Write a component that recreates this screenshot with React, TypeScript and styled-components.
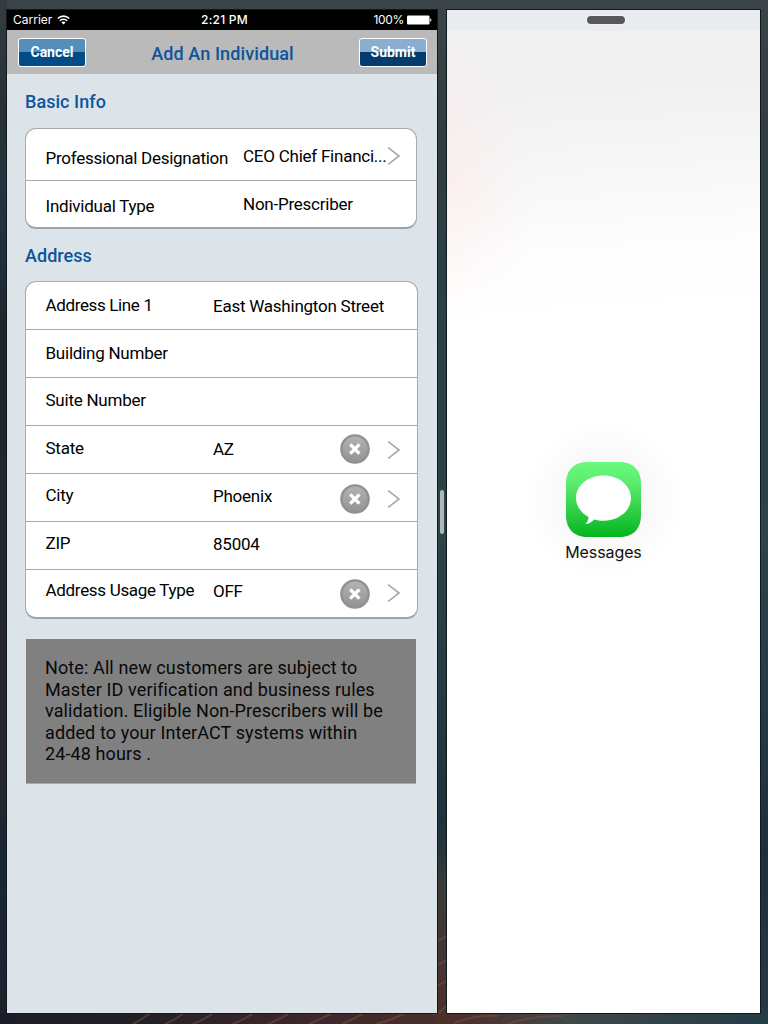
import React from "react";
import styled, { createGlobalStyle } from "styled-components";

const GlobalStyle = createGlobalStyle`
  *, *::before, *::after { box-sizing: border-box; }
  body { margin: 0; font-family: Roboto, "Liberation Sans", sans-serif; }
`;

const Screen = styled.div`
  position: relative;
  width: 768px;
  height: 1024px;
  padding: 10px 8px 11px 7px;
  display: grid;
  grid-template-columns: 430px 10px 313px;
  overflow: hidden;
  background:
    linear-gradient(180deg, #343c42 0, #273034 110px, #22363e 180px, #20303a 250px, #20252f 330px, #242631 500px, #262630 780px, #182634 880px, #20202c 1014px) 0 0 / 7px 1024px no-repeat,
    linear-gradient(180deg, #3b4549 0, #303c41 130px, #2b3f46 260px, #2c434a 540px, #243b43 700px, #1c303b 850px, #263a43 1024px);
`;

const Wallpaper = styled.svg`
  position: absolute;
  left: 0;
  bottom: 0;
`;

const AppWindow = styled.section`
  position: relative;
  display: flex;
  flex-direction: column;
  background: #dce4ea;
  box-shadow: 0 0 0 1px #10191b;
`;

const StatusBar = styled.div`
  display: grid;
  grid-template-columns: 1fr auto 1fr;
  align-items: center;
  height: 20px;
  padding: 0 5px 0 6px;
  background: #000;
  color: #fff;
  font: 400 12px/20px Inter, Roboto, sans-serif;
`;

const StatusGroup = styled.div<{ $end?: boolean }>`
  display: flex;
  align-items: center;
  justify-content: ${(p) => (p.$end ? "flex-end" : "flex-start")};
  gap: ${(p) => (p.$end ? 3 : 5)}px;
  letter-spacing: ${(p) => (p.$end ? -0.3 : 0)}px;
`;

const Clock = styled.span`
  padding-left: 4px;
  font-weight: 500;
  letter-spacing: 0.25px;
`;

const NavBar = styled.header`
  display: flex;
  align-items: center;
  justify-content: space-between;
  height: 44px;
  padding: 0 10px 0 11px;
  background: #bababa;
`;

const NavTitle = styled.h1`
  margin: 0;
  padding-top: 3px;
  font-size: 18px;
  font-weight: 480;
  letter-spacing: 0.1px;
  color: #0d559d;
`;

const NavButton = styled.button<{ $top: string; $bottom: string }>`
  width: 68px;
  height: 29px;
  padding: 0;
  border: 1px solid #fff;
  border-radius: 3px;
  background: linear-gradient(180deg, ${(p) => p.$top} 0 50%, ${(p) => p.$bottom} 50% 100%);
  color: #fff;
  font: 700 14px/26px Roboto, sans-serif;
`;

const Form = styled.main`
  display: flex;
  flex-direction: column;
  padding: 17px 19px 0 18px;
`;

const SectionTitle = styled.h2<{ $height: number }>`
  margin: 0;
  height: ${(p) => p.$height}px;
  font-size: 18px;
  font-weight: 480;
  line-height: 22px;
  letter-spacing: 0.05px;
  color: #0d559d;
`;

const Card = styled.div<{ $width: number; $gap: number }>`
  width: ${(p) => p.$width}px;
  margin-bottom: ${(p) => p.$gap}px;
  border: 1px solid #a7abae;
  border-bottom-width: 2px;
  border-bottom-color: #9ca5aa;
  border-radius: 11px;
  background: #fff;
  overflow: hidden;
`;

const Row = styled.div<{ $height: number; $columns: string }>`
  display: grid;
  grid-template-columns: ${(p) => p.$columns};
  align-items: start;
  height: ${(p) => p.$height}px;
  padding-left: 19.5px;
  & + & { border-top: 1px solid #a9a9a9; }
`;

const RowText = styled.span<{ $top: number; $spacing?: number }>`
  padding-top: ${(p) => p.$top}px;
  font-size: 17px;
  line-height: 20px;
  letter-spacing: ${(p) => p.$spacing ?? -0.24}px;
  white-space: nowrap;
  color: #000;
`;

const IconCell = styled.span<{ $top: number }>`
  padding-top: ${(p) => p.$top}px;
  line-height: 0;
`;

const Note = styled.p`
  width: 390px;
  height: 145px;
  margin: 0 0 0 1px;
  padding: 18px 19px;
  border-bottom: 1px solid #aaa;
  background: #808080;
  color: #080808;
  font-size: 18px;
  line-height: 21.6px;
  letter-spacing: 0.11px;
  white-space: nowrap;
`;

const Divider = styled.div`
  position: relative;
  display: flex;
  align-items: center;
  justify-content: center;
`;

const DividerGrip = styled.span`
  width: 4px;
  height: 44px;
  border-radius: 2px;
  background: #b2b8ba;
`;

const SideWindow = styled.section`
  position: relative;
  display: flex;
  flex-direction: column;
  align-items: center;
  box-shadow: 0 0 0 1px #10191b;
  background:
    radial-gradient(ellipse 90px 150px at 0 165px, rgba(255, 230, 228, 0.45), transparent),
    linear-gradient(176deg, #efeff1 0, #f1f1f2 90px, #f7f7f8 170px, #fdfdfd 250px, #fff 320px);
`;

const SideHeader = styled.div`
  display: flex;
  align-items: center;
  justify-content: center;
  width: 100%;
  height: 20px;
  padding-left: 5px;
  background: #e8ecef;
`;

const Handle = styled.span`
  width: 38px;
  height: 8px;
  border-radius: 4px;
  background: #58585a;
  box-shadow: 0 0 1px 1px #f3f4f5;
`;

const AppTile = styled.div`
  display: flex;
  flex-direction: column;
  align-items: center;
  width: 180px;
  margin-top: 392px;
  padding-top: 40px;
  height: 190px;
  gap: 5px;
  background: radial-gradient(circle 82px at 50% 78px, rgba(0, 0, 0, 0.035) 30%, transparent 100%);
  font: 400 16px/20px Inter, Roboto, sans-serif;
  letter-spacing: -0.1px;
  color: #111;
`;

const WifiIcon = () => (
  <svg width="13" height="10" viewBox="0 0 13 10" fill="none" stroke="#fff" strokeWidth="1.6">
    <path d="M.8 3.5a8.1 8.1 0 0 1 11.4 0M2.8 5.7a5.3 5.3 0 0 1 7.4 0" />
    <path d="M6.5 9.6 4.5 7.5a2.8 2.8 0 0 1 4 0Z" fill="#fff" stroke="none" />
  </svg>
);

const BatteryIcon = () => (
  <svg width="25" height="10" viewBox="0 0 25 10" fill="#fff">
    <rect x="0" y="0.5" width="22.5" height="9" rx="1.2" />
    <path d="M23.2 3.2c1.6.5 1.6 3.1 0 3.6Z" />
  </svg>
);

const Chevron = () => (
  <svg width="14" height="20" viewBox="0 0 14 20" fill="none" stroke="#aaa" strokeWidth="1.7">
    <path d="M1.2 1.7 12 10 1.2 18.3" />
  </svg>
);

const ClearIcon = () => (
  <svg width="30" height="30" viewBox="0 0 30 30">
    <defs>
      <linearGradient id="clearFill" x1="0" y1="0" x2="0" y2="1">
        <stop offset="0" stopColor="#b4b4b4" />
        <stop offset="1" stopColor="#929292" />
      </linearGradient>
    </defs>
    <circle cx="15" cy="15" r="13.6" fill="url(#clearFill)" stroke="#919191" strokeWidth="2.4" />
    <path d="m10.2 10.4 9.200 9.200m0-9.200-9.200 9.200" stroke="#fff" strokeWidth="3.4" />
  </svg>
);

const MessagesIcon = () => (
  <svg width="75" height="75" viewBox="0 0 75 75">
    <defs>
      <linearGradient id="messagesFill" x1="0" y1="0" x2="0" y2="1">
        <stop offset="0" stopColor="#69fb7d" />
        <stop offset=".3" stopColor="#5bea6d" />
        <stop offset="1" stopColor="#04b41f" />
      </linearGradient>
    </defs>
    <path
      d="M22 0h31c13 0 22 7 22 22v31c0 15-9 22-22 22H22C9 75 0 68 0 53V22C0 7 9 0 22 0Z"
      fill="url(#messagesFill)"
    />
    <path
      d="M37.500 13.500c15.300 0 27.500 10 27.500 22.600S52.800 58.700 37.500 58.700c-3.300 0-6.500-.5-9.400-1.300-2.500 2.500-5.200 4.400-8.700 4.700 1.700-1.700 3.200-3.800 3-7.200C14.800 50.700 10 43.900 10 36.100c0-12.600 12.200-22.600 27.500-22.600Z"
      fill="#fff"
    />
  </svg>
);

type Field = {
  label: string;
  value?: string;
  height: number;
  labelTop: number;
  valueTop?: number;
  labelSpacing?: number;
  clearTop?: number;
  chevronTop?: number;
};

const basicFields: Field[] = [
  { label: "Professional Designation", value: "CEO Chief Financi...", height: 51, labelTop: 19, valueTop: 17, chevronTop: 17, labelSpacing: -0.27 },
  { label: "Individual Type", value: "Non-Prescriber", height: 47, labelTop: 15, valueTop: 13 },
];

const addressFields: Field[] = [
  { label: "Address Line 1", value: "East Washington Street", height: 47, labelTop: 13, valueTop: 14, labelSpacing: -0.36 },
  { label: "Building Number", height: 48, labelTop: 13 },
  { label: "Suite Number", height: 48, labelTop: 12 },
  { label: "State", value: "AZ", height: 48, labelTop: 12, valueTop: 13, clearTop: 8, chevronTop: 14 },
  { label: "City", value: "Phoenix", height: 48, labelTop: 11, valueTop: 12, clearTop: 10, chevronTop: 15 },
  { label: "ZIP", value: "85004", height: 48, labelTop: 11, valueTop: 12 },
  { label: "Address Usage Type", value: "OFF", height: 48, labelTop: 10, valueTop: 11, clearTop: 9, chevronTop: 13, labelSpacing: -0.31 },
];

const FieldRow = ({ field, columns }: { field: Field; columns: string }) => (
  <Row $height={field.height} $columns={columns}>
    <RowText $top={field.labelTop} $spacing={field.labelSpacing}>{field.label}</RowText>
    <RowText $top={field.valueTop ?? 0}>{field.value}</RowText>
    <IconCell $top={field.clearTop ?? 0}>{field.clearTop !== undefined && <ClearIcon />}</IconCell>
    <IconCell $top={field.chevronTop ?? 0}>{field.chevronTop !== undefined && <Chevron />}</IconCell>
  </Row>
);

export default function App() {
  return (
    <>
      <GlobalStyle />
      <Screen>
        <Wallpaper width="768" height="200" viewBox="0 0 768 200">
          <defs>
            <linearGradient id="dune" x1="0" x2="1">
              <stop offset="0" stopColor="#1b1c28" />
              <stop offset=".2" stopColor="#242127" />
              <stop offset=".35" stopColor="#38252a" />
              <stop offset=".6" stopColor="#4c302c" />
              <stop offset=".74" stopColor="#404849" />
              <stop offset="1" stopColor="#233c46" />
            </linearGradient>
            <linearGradient id="ridge" x1="0" y1="0" x2="0" y2="1">
              <stop offset="0" stopColor="#323f40" stopOpacity="0" />
              <stop offset=".3" stopColor="#3b3b38" />
              <stop offset="1" stopColor="#4c302a" />
            </linearGradient>
          </defs>
          <rect y="189" width="768" height="11" fill="url(#dune)" />
          <path d="M437 0h10v200h-10z" fill="url(#ridge)" />
          <g fill="none" stroke="#805044" strokeWidth="2" opacity=".5">
            <path d="M133 200q12-6 18-12m14 12q12-5 20-12m8 12q12-5 22-12m18 12q12-5 22-12m13 12q12-5 23-12m18 12q12-5 25-12m8 12q12-5 24-12m10 12q18-4 38-16" />
            <path d="M433 191q9-2 18-15m-18-12q10-5 17-9m-17-12q10-4 17-9m-17-15q10-4 17-9M454 199q23-9 44-7m10 8q20-8 55-8" />
          </g>
        </Wallpaper>

        <AppWindow>
          <StatusBar>
            <StatusGroup>Carrier <WifiIcon /></StatusGroup>
            <Clock>2:21 PM</Clock>
            <StatusGroup $end>100% <BatteryIcon /></StatusGroup>
          </StatusBar>
          <NavBar>
            <NavButton $top="#558dbb" $bottom="#004c87">Cancel</NavButton>
            <NavTitle>Add An Individual</NavTitle>
            <NavButton $top="#88aed0" $bottom="#033c6d">Submit</NavButton>
          </NavBar>
          <Form>
            <SectionTitle $height={37}>Basic Info</SectionTitle>
            <Card $width={392} $gap={16}>
              {basicFields.map((f) => (
                <FieldRow key={f.label} field={f} columns="197.5px 130px 13.5px 1fr" />
              ))}
            </Card>
            <SectionTitle $height={36}>Address</SectionTitle>
            <Card $width={393} $gap={20}>
              {addressFields.map((f) => (
                <FieldRow key={f.label} field={f} columns="167.5px 126.5px 47.5px 1fr" />
              ))}
            </Card>
            <Note>
              Note: All new customers are subject to<br />
              Master ID verification and business rules<br />
              validation. Eligible Non-Prescribers will be<br />
              added to your InterACT systems within<br />
              24-48 hours .
            </Note>
          </Form>
        </AppWindow>

        <Divider><DividerGrip /></Divider>

        <SideWindow>
          <SideHeader><Handle /></SideHeader>
          <AppTile>
            <MessagesIcon />
            Messages
          </AppTile>
        </SideWindow>
      </Screen>
    </>
  );
}
